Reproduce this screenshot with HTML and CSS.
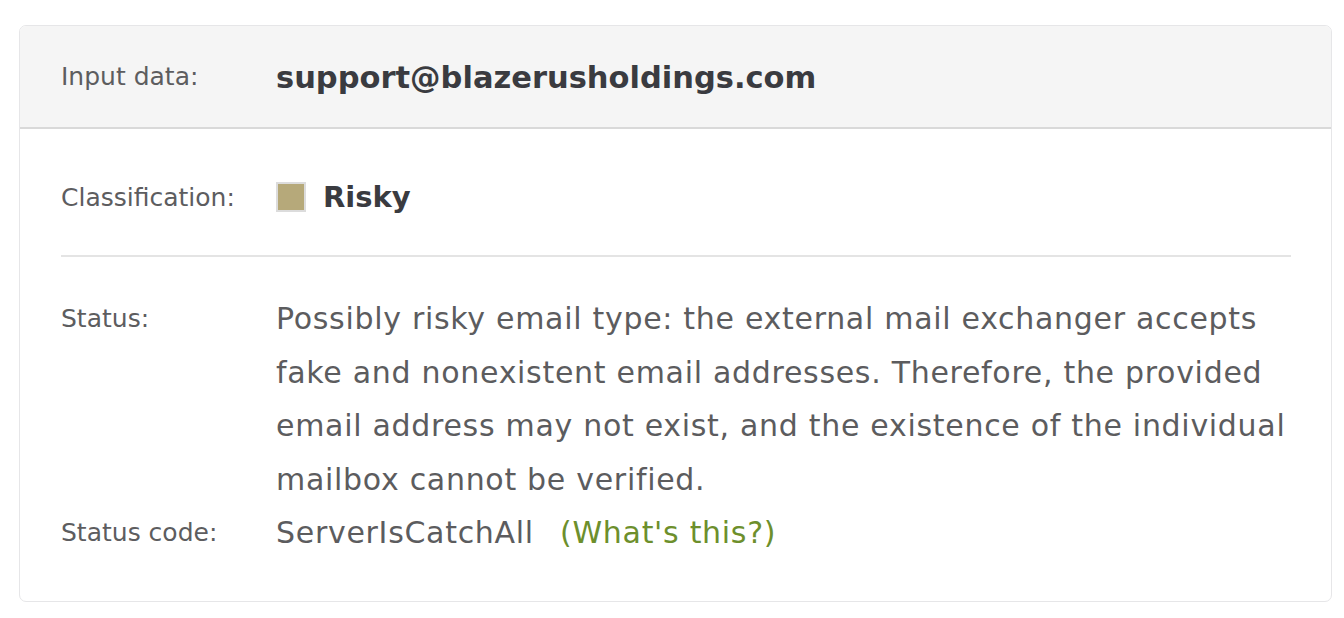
FILE: index.html
```html
<!DOCTYPE html>
<html>
<head>
	<link rel="stylesheet" href="styles.css">
</head>
<body>
    <div class="page">
        <div class="result_card">
            <div class="result_head">
                <span class="label">Input data:</span>
                <span class="email">support@blazerusholdings.com</span>
            </div>
            <div class="result_body">
                <div class="row row_class">
                    <span class="label">Classification:</span>
                    <span class="class_value"><span class="swatch"></span>Risky</span>
                </div>
                <div class="row row_text">
                    <span class="label">Status:</span>
                    <span class="value">Possibly risky email type: the external mail exchanger accepts fake and nonexistent email addresses. Therefore, the provided email address may not exist, and the existence of the individual mailbox cannot be verified.</span>
                </div>
                <div class="row row_text">
                    <span class="label">Status code:</span>
                    <span class="value">ServerIsCatchAll <a href="#" class="whats_this">(What's this?)</a></span>
                </div>
            </div>
        </div>
    </div>
</body>
</html>
```

FILE: styles.css
```css
body {
	margin: 0;
	background: #fff;
	font-family: "DejaVu Sans", "Liberation Sans", sans-serif;
}
a { text-decoration: none; }
.page {
	padding: 25px 12px 17px 19px;
}
.result_card {
	border: 1px solid #e6e6e8;
	border-radius: 7px;
	overflow: hidden;
}
.result_head {
	display: flex;
	align-items: center;
	height: 101px;
	padding-left: 41px;
	background-color: #f5f5f5;
	border-bottom: 2px solid #d9d9d9;
}
.label {
	flex: none;
	width: 215px;
	font-size: 25px;
	color: #5d5d5f;
}
.email {
	font-size: 30.5px;
	font-weight: 700;
	color: #3a3b40;
	padding-top: 1px;
}
.result_body {
	padding: 38px 10px 41px 41px;
}
.row {
	display: flex;
}
.row_class {
	align-items: center;
	height: 60px;
	margin-right: 30px;
	padding-bottom: 28px;
	margin-bottom: 35px;
	border-bottom: 2px solid #e4e4e4;
}
.class_value {
	display: flex;
	align-items: center;
	font-size: 29px;
	font-weight: 700;
	color: #3a3b40;
}
.swatch {
	width: 26px;
	height: 26px;
	margin-right: 17px;
	background-color: #b6a97a;
	border: 2px solid #dcdcdc;
}
.row_text {
	line-height: 53.5px;
}
.row_text .value {
	font-size: 30px;
	letter-spacing: 0.7px;
	color: #5c5c5e;
}
.whats_this {
	margin-left: 16px;
	color: #6d8f2c;
}
```
